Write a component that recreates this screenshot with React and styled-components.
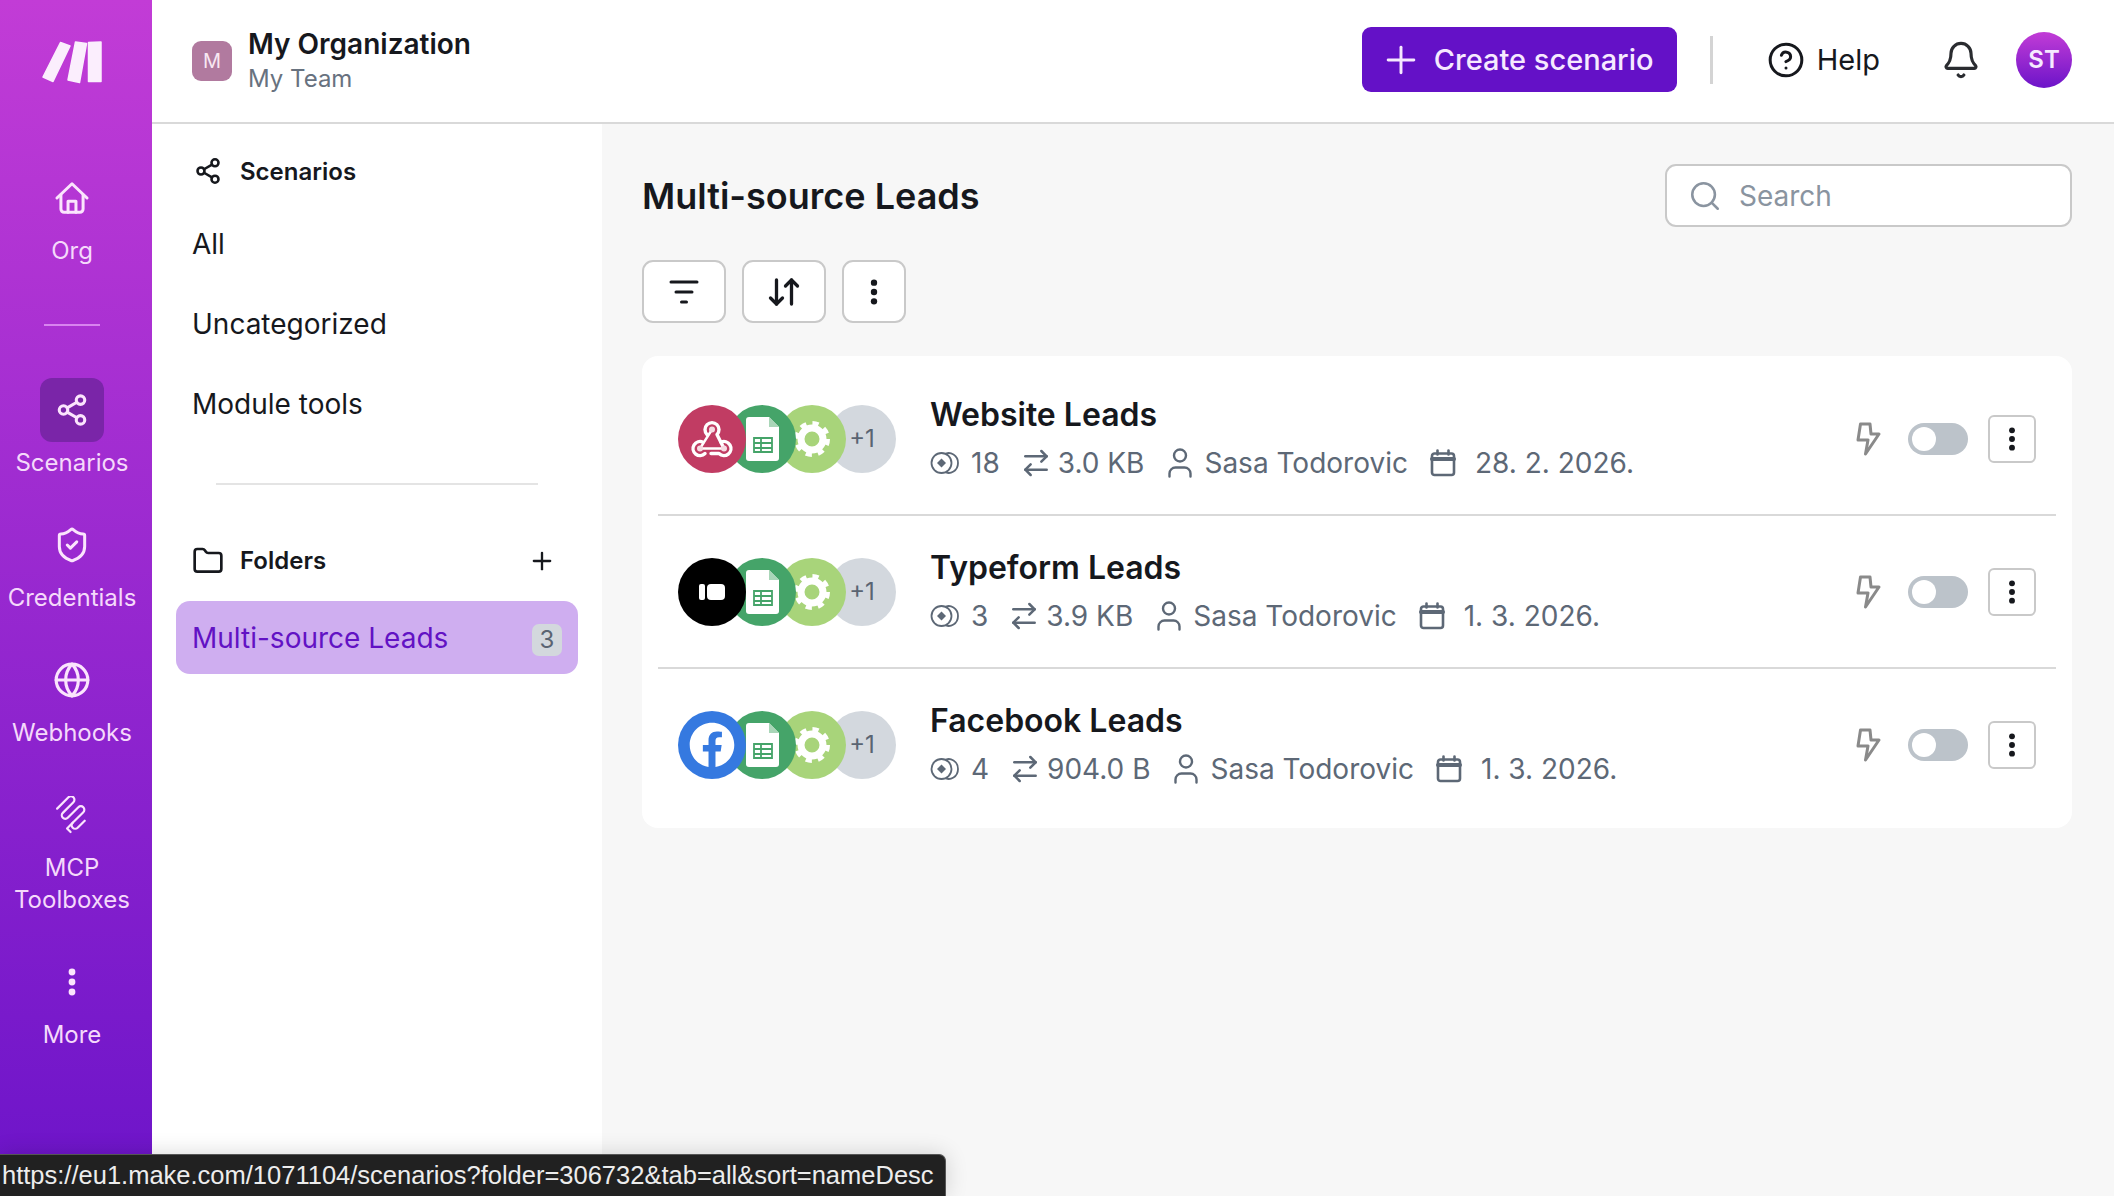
import React from "react";
import styled, { createGlobalStyle } from "styled-components";
import { Share2, ShieldCheck, Globe, Plus, CircleHelp, Bell, Search, Folder, User, ArrowRightLeft, ArrowDownUp } from "lucide-react";
import { FaFacebook } from "react-icons/fa";

const GlobalStyle = createGlobalStyle`
  html, body { margin: 0; padding: 0; }
  body { font-family: Inter, "Liberation Sans", sans-serif; color: #16181d; background: #fff; }
  * { box-sizing: border-box; }
`;

const Page = styled.div`
  display: flex;
  width: 2114px;
  height: 1196px;
  overflow: hidden;
  position: relative;
`;

const Rail = styled.aside`
  width: 152px;
  flex: none;
  padding-right: 8px;
  display: flex;
  flex-direction: column;
  align-items: center;
  background: linear-gradient(180deg, #c23cd6 0%, #6c14c9 100%);
  color: #f5d9fb;
`;

const LogoWrap = styled.div`
  height: 124px;
  width: 100%;
  display: flex;
  align-items: center;
  justify-content: center;
  margin-bottom: 42px;
`;

const RailList = styled.div`
  display: flex;
  flex-direction: column;
  gap: 34px;
  width: 100%;
`;

const RailItem = styled.div`
  display: flex;
  flex-direction: column;
  align-items: center;
  font-size: 24px;
  line-height: 32px;
  text-align: center;
`;

const RailIcon = styled.div`
  width: 64px;
  height: 64px;
  margin-bottom: 5px;
  display: flex;
  align-items: center;
  justify-content: center;
  border-radius: 12px;
  background: ${(p) => (p.$active ? "#7a25a8" : "transparent")};
`;

const RailDivider = styled.div`
  width: 56px;
  height: 2px;
  background: #d884ef;
  margin: 23px 0 18px;
`;

const Content = styled.div`
  flex: 1;
  display: flex;
  flex-direction: column;
  min-width: 0;
`;

const Header = styled.header`
  height: 124px;
  flex: none;
  display: flex;
  align-items: center;
  padding: 0 42px 0 40px;
  border-bottom: 2px solid #d9d9d9;
  background: #fff;
`;

const OrgBadge = styled.div`
  width: 40px;
  height: 40px;
  border-radius: 9px;
  background: #b17a9f;
  color: #f8e8f2;
  font-size: 20px;
  display: flex;
  align-items: center;
  justify-content: center;
  margin-right: 16px;
`;

const OrgText = styled.div`
  flex: 1;
  display: flex;
  flex-direction: column;
`;

const OrgName = styled.div`
  font-size: 28px;
  font-weight: 600;
  line-height: 36px;
`;

const TeamName = styled.div`
  font-size: 24px;
  line-height: 34px;
  color: #68727f;
`;

const HeaderActions = styled.div`
  display: flex;
  align-items: center;
  margin-bottom: 3px;
`;

const CreateButton = styled.button`
  width: 315px;
  height: 65px;
  border: 0;
  border-radius: 9px;
  background: #6411c7;
  color: #f6e9ff;
  font-family: inherit;
  font-size: 29px;
  font-weight: 500;
  padding: 0 0 0 17px;
  display: flex;
  align-items: center;
  gap: 11px;
`;

const HeaderDivider = styled.div`
  width: 3px;
  height: 48px;
  background: #d4d4d4;
  margin: 0 54px 0 33px;
`;

const HelpLink = styled.div`
  display: flex;
  align-items: center;
  gap: 12px;
  font-size: 29px;
  margin-right: 61px;
`;

const Avatar = styled.div`
  width: 56px;
  height: 56px;
  margin-left: 35px;
  border-radius: 50%;
  background: linear-gradient(180deg, #c23cd6 0%, #6c14c9 100%);
  color: #f6e9ff;
  font-size: 24px;
  font-weight: 600;
  display: flex;
  align-items: center;
  justify-content: center;
`;

const Body = styled.div`
  flex: 1;
  display: flex;
  min-height: 0;
`;

const SidePanel = styled.nav`
  width: 450px;
  flex: none;
  background: #fff;
  padding: 0 24px;
  display: flex;
  flex-direction: column;
`;

const PanelHeading = styled.div`
  display: flex;
  align-items: center;
  gap: 18px;
  height: ${(p) => p.$height}px;
  padding: ${(p) => p.$top || 0}px 22px 0 18px;
  font-size: 24px;
  font-weight: 600;
  & > span { flex: 1; }
`;

const PanelLink = styled.div`
  height: 80px;
  padding-left: 16px;
  display: flex;
  align-items: center;
  font-size: 28px;
`;

const PanelDivider = styled.div`
  height: 2px;
  margin: 39px 40px;
  background: #e4e4e4;
`;

const FolderItem = styled.div`
  height: 73px;
  margin-top: 4px;
  padding: 0 16px;
  display: flex;
  align-items: center;
  justify-content: space-between;
  border-radius: 14px;
  background: #cfaef0;
  color: #6212c4;
  font-size: 28px;
`;

const CountBadge = styled.span`
  width: 30px;
  height: 32px;
  margin-top: 4px;
  border-radius: 7px;
  background: #d3d8dd;
  color: #5a6472;
  font-size: 24px;
  display: flex;
  align-items: center;
  justify-content: center;
`;

const Main = styled.main`
  flex: 1;
  min-width: 0;
  background: #f7f7f7;
  padding: 40px 42px 0 40px;
`;

const TitleRow = styled.div`
  display: flex;
  align-items: center;
  justify-content: space-between;
  height: 63px;
  margin-bottom: 33px;
`;

const Title = styled.h1`
  margin: 0;
  font-size: 36px;
  font-weight: 600;
`;

const SearchBox = styled.div`
  width: 407px;
  height: 63px;
  background: #fff;
  border: 2px solid #c9c9c9;
  border-radius: 11px;
  padding-left: 21px;
  display: flex;
  align-items: center;
  gap: 17px;
  color: #8a94a0;
  font-size: 28px;
`;

const Toolbar = styled.div`
  display: flex;
  gap: 16px;
  margin-bottom: 33px;
`;

const ToolButton = styled.button`
  width: ${(p) => p.$width}px;
  height: 63px;
  background: #fff;
  border: 2px solid #c9c9c9;
  border-radius: 11px;
  padding: 0;
  display: flex;
  align-items: center;
  justify-content: center;
  color: #16181d;
`;

const Card = styled.section`
  background: #fff;
  border-radius: 16px;
  padding: 7px 16px 8px;
`;

const Row = styled.article`
  height: ${(p) => (p.$last ? 151 : 153)}px;
  padding: 0 20px;
  display: flex;
  align-items: center;
  border-bottom: ${(p) => (p.$last ? "0" : "2px solid #d9d9d9")};
`;

const AppStack = styled.div`
  display: flex;
  width: 252px;
  flex: none;
`;

const AppCircle = styled.div`
  width: 68px;
  height: 68px;
  margin-right: -18px;
  border-radius: 50%;
  background: ${(p) => p.$bg};
  color: ${(p) => p.$color || "#fff"};
  font-size: 24px;
  position: relative;
  z-index: ${(p) => p.$z};
  display: flex;
  align-items: center;
  justify-content: center;
`;

const RowText = styled.div`
  flex: 1;
  min-width: 0;
  display: flex;
  flex-direction: column;
  gap: 8px;
  margin-top: -3px;
`;

const RowTitle = styled.div`
  font-size: 32px;
  font-weight: 600;
  line-height: 44px;
`;

const Meta = styled.div`
  display: flex;
  align-items: center;
  gap: 20px;
  font-size: 28px;
  line-height: 36px;
  color: #5d6876;
`;

const MetaItem = styled.span`
  display: flex;
  align-items: center;
  gap: ${(p) => p.$gap || 11}px;
  margin-left: ${(p) => p.$shift || 0}px;
`;

const RowActions = styled.div`
  display: flex;
  align-items: center;
  gap: 20px;
`;

const Toggle = styled.div`
  width: 60px;
  height: 32px;
  margin-left: 6px;
  border-radius: 16px;
  background: #bcc3ca;
  padding: 4px;
`;

const ToggleKnob = styled.div`
  width: 24px;
  height: 24px;
  border-radius: 50%;
  background: #fff;
`;

const MenuButton = styled.button`
  width: 48px;
  height: 48px;
  background: #fff;
  border: 2px solid #c9c9c9;
  border-radius: 6px;
  padding: 0;
  display: flex;
  align-items: center;
  justify-content: center;
`;

const StatusBar = styled.div`
  position: absolute;
  left: 0;
  bottom: 0;
  width: 946px;
  height: 42px;
  padding-left: 2px;
  background: #212121;
  border: 1px solid #565656;
  border-left: 0;
  border-bottom: 0;
  border-top-right-radius: 7px;
  box-shadow: 0 0 22px rgba(0, 0, 0, 0.16);
  color: #ededed;
  font-family: "Liberation Sans", Arial, sans-serif;
  font-size: 25.5px;
  line-height: 41px;
  white-space: nowrap;
`;

const MakeLogo = () => (
  <svg width="60" height="43" viewBox="0 0 60 43" fill="#fbeefd" stroke="#fbeefd" strokeWidth="1.5" strokeLinejoin="round">
    <path d="M18.5 1.5 28 5 11 40.5 1 36z" />
    <path d="M33.5 1 44.5 2.5 37.5 41.5 26 39z" />
    <path d="M46.5 1.5 59 1v39.5H46.5z" />
  </svg>
);

const HouseIcon = () => (
  <svg width="38" height="38" viewBox="0 0 24 24" fill="none" stroke="#fbe4fd" strokeWidth="1.9" strokeLinecap="round" strokeLinejoin="round">
    <path d="M2.5 12 12 3l9.5 9" />
    <path d="M5 10v9a2 2 0 0 0 2 2h10a2 2 0 0 0 2-2v-9" />
    <path d="M9.5 21v-7h5v7" />
  </svg>
);

const ToolboxIcon = () => (
  <svg width="38" height="38" viewBox="0 0 38 38" fill="none" stroke="#fbe4fd" strokeWidth="2.2" strokeLinecap="round" strokeLinejoin="round">
    <g transform="rotate(45 19 19)">
      <path d="M4 25V9a3.5 3.5 0 0 1 7 0v15a3.5 3.5 0 0 0 7 0V9a3.5 3.5 0 0 1 7 0v15a3.5 3.5 0 0 0 7 0V14" />
      <path d="M25 24v8h5" />
    </g>
  </svg>
);

const Dots = ({ color = "#16181d", size = 30 }) => (
  <svg width={size} height={size} viewBox="0 0 30 30" fill={color}>
    <circle cx="15" cy="5" r="3.4" />
    <circle cx="15" cy="15" r="3.4" />
    <circle cx="15" cy="25" r="3.4" />
  </svg>
);

const FilterIcon = () => (
  <svg width="30" height="26" viewBox="0 0 30 26" fill="none" stroke="#16181d" strokeWidth="3" strokeLinecap="round">
    <path d="M2 3h26M7 13h16M12.5 23h5" />
  </svg>
);

const EyeIcon = () => (
  <svg width="30" height="26" viewBox="0 0 30 26" fill="none" stroke="#5d6876" strokeWidth="1.8">
    <circle cx="11.5" cy="13" r="10" />
    <path d="M16 3.6c4-1.8 12 1 12 9.4s-8 11.2-12 9.4" />
    <path d="M11.5 8.5 16 13l-4.5 4.5L7 13z" fill="#5d6876" stroke="none" />
  </svg>
);

const CalendarIcon = () => (
  <svg width="26" height="28" viewBox="0 0 26 28" fill="none" stroke="#5d6876" strokeWidth="2.6" strokeLinecap="round">
    <rect x="2" y="4.5" width="22" height="21.5" rx="2.5" />
    <path d="M2 10h22" strokeWidth="4" />
    <path d="M7.5 1.5v4M18.5 1.5v4" />
  </svg>
);

const BoltIcon = () => (
  <svg width="26" height="34" viewBox="0 0 26 34" fill="none" stroke="#8a8a8a" strokeWidth="3" strokeLinejoin="round" strokeLinecap="round">
    <path d="M4.5 2H14l1 10h8L9.5 32 12 18H2z" />
  </svg>
);

const SheetIcon = () => (
  <svg width="33" height="44" viewBox="0 0 33 44">
    <path d="M3 0h20l10 10v31a3 3 0 0 1-3 3H3a3 3 0 0 1-3-3V3a3 3 0 0 1 3-3z" fill="#fff" />
    <path d="M23 0l10 10H23z" fill="#a9d6b8" />
    <path d="M8 21h18v14H8zM8 26h18M8 31h18M15 21v14" fill="none" stroke="#45a469" strokeWidth="1.8" />
  </svg>
);

const GearIcon = () => (
  <svg width="36" height="36" viewBox="0 0 36 36" fill="none" stroke="#fff">
    <circle cx="18" cy="18" r="11" strokeWidth="7" />
    <circle cx="18" cy="18" r="15.5" strokeWidth="5" strokeDasharray="6.1 6.07" />
  </svg>
);

const TypeformIcon = () => (
  <svg width="26" height="16" viewBox="0 0 26 16" fill="#fff">
    <rect x="0" y="0" width="6" height="16" rx="2" />
    <rect x="8" y="0" width="18" height="16" rx="4" />
  </svg>
);

const WebhookIcon = () => (
  <svg width="46" height="46" viewBox="0 -2.5 46 46" fill="none" stroke="#fff" strokeWidth="3.4" strokeLinecap="round" strokeLinejoin="round">
    <path d="M18 16A7 7 0 1 1 28 16L35 30" />
    <path d="M32 23.7A7 7 0 1 1 30 35H22" />
    <path d="M14 23.7A7 7 0 1 0 16 35" />
    <path d="M11 30 23 11M11 30H35" strokeWidth="2.4" />
    <g fill="#f6dbe3" stroke="none">
      <circle cx="23" cy="11" r="3" />
      <circle cx="11" cy="30" r="3" />
      <circle cx="35" cy="30" r="3" />
    </g>
  </svg>
);

const railItems = [
  { label: "Org", icon: <HouseIcon /> },
  { divider: true },
  { label: "Scenarios", icon: <Share2 size={34} strokeWidth={2.2} color="#fbe4fd" />, active: true },
  { label: "Credentials", icon: <ShieldCheck size={38} strokeWidth={1.9} color="#fbe4fd" /> },
  { label: "Webhooks", icon: <Globe size={38} strokeWidth={2} color="#fbe4fd" /> },
  { label: <>MCP<br />Toolboxes</>, icon: <ToolboxIcon /> },
  { label: "More", icon: <Dots color="#fbe4fd" size={30} /> },
];

const scenarios = [
  { name: "Website Leads", runs: "18", size: "3.0 KB", date: "28. 2. 2026.", bg: "#c13c63", icon: <WebhookIcon /> },
  { name: "Typeform Leads", runs: "3", size: "3.9 KB", date: "1. 3. 2026.", bg: "#000", icon: <TypeformIcon /> },
  { name: "Facebook Leads", runs: "4", size: "904.0 B", date: "1. 3. 2026.", bg: "#3579e0", icon: <FaFacebook size={46} color="#fff" /> },
];

const App = () => {
  return (
    <Page>
      <GlobalStyle />
      <Rail>
        <LogoWrap><MakeLogo /></LogoWrap>
        <RailList>
          {railItems.map((item, i) =>
            item.divider ? (
              <RailItem key={i}><RailDivider /></RailItem>
            ) : (
              <RailItem key={i}>
                <RailIcon $active={item.active}>{item.icon}</RailIcon>
                {item.label}
              </RailItem>
            )
          )}
        </RailList>
      </Rail>
      <Content>
        <Header>
          <OrgBadge>M</OrgBadge>
          <OrgText>
            <OrgName>My Organization</OrgName>
            <TeamName>My Team</TeamName>
          </OrgText>
          <HeaderActions>
            <CreateButton><Plus size={44} strokeWidth={1.6} />Create scenario</CreateButton>
            <HeaderDivider />
            <HelpLink><CircleHelp size={38} strokeWidth={1.9} />Help</HelpLink>
            <Bell size={40} strokeWidth={1.9} color="#2a2c30" />
            <Avatar>ST</Avatar>
          </HeaderActions>
        </Header>
        <Body>
          <SidePanel>
            <PanelHeading $height={80} $top={14}><Share2 size={28} strokeWidth={2.2} /><span>Scenarios</span></PanelHeading>
            <PanelLink>All</PanelLink>
            <PanelLink>Uncategorized</PanelLink>
            <PanelLink>Module tools</PanelLink>
            <PanelDivider />
            <PanelHeading $height={73}>
              <Folder size={32} strokeWidth={2} style={{ marginLeft: -2, marginRight: -2 }} />
              <span>Folders</span>
              <Plus size={28} strokeWidth={2} />
            </PanelHeading>
            <FolderItem>Multi-source Leads<CountBadge>3</CountBadge></FolderItem>
          </SidePanel>
          <Main>
            <TitleRow>
              <Title>Multi-source Leads</Title>
              <SearchBox><Search size={34} strokeWidth={1.8} />Search</SearchBox>
            </TitleRow>
            <Toolbar>
              <ToolButton $width={84}><FilterIcon /></ToolButton>
              <ToolButton $width={84}><ArrowDownUp size={36} strokeWidth={2.2} /></ToolButton>
              <ToolButton $width={64}><Dots size={28} /></ToolButton>
            </Toolbar>
            <Card>
              {scenarios.map((s, i) => (
                <Row key={s.name} $last={i === scenarios.length - 1}>
                  <AppStack>
                    <AppCircle $bg={s.bg} $z={4}>{s.icon}</AppCircle>
                    <AppCircle $bg="#45a469" $z={3}><SheetIcon /></AppCircle>
                    <AppCircle $bg="#a8d47a" $z={2}><GearIcon /></AppCircle>
                    <AppCircle $bg="#d3d8de" $color="#5a6472" $z={1}>+1</AppCircle>
                  </AppStack>
                  <RowText>
                    <RowTitle>{s.name}</RowTitle>
                    <Meta>
                      <MetaItem><EyeIcon />{s.runs}</MetaItem>
                      <MetaItem $gap={6}><ArrowRightLeft size={32} strokeWidth={1.9} />{s.size}</MetaItem>
                      <MetaItem $gap={6} $shift={-2}><User size={36} strokeWidth={1.6} />Sasa Todorovic</MetaItem>
                      <MetaItem $gap={19} $shift={2}><CalendarIcon />{s.date}</MetaItem>
                    </Meta>
                  </RowText>
                  <RowActions>
                    <BoltIcon />
                    <Toggle><ToggleKnob /></Toggle>
                    <MenuButton><Dots size={26} /></MenuButton>
                  </RowActions>
                </Row>
              ))}
            </Card>
          </Main>
        </Body>
      </Content>
      <StatusBar>https://eu1.make.com/1071104/scenarios?folder=306732&amp;tab=all&amp;sort=nameDesc</StatusBar>
    </Page>
  );
};

export default App;
